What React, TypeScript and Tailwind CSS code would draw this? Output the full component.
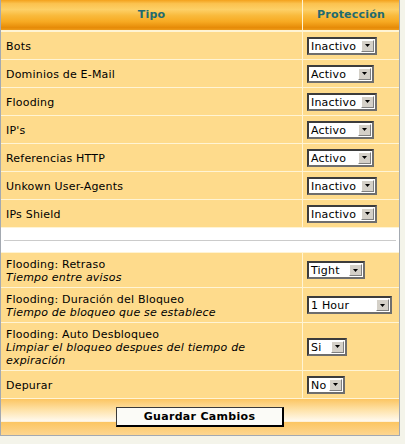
import React from "react";

type Row = {
  label: string;
  hint?: string;
  value: string;
  width: string;
  height: string;
};

const basicRows: Row[] = [
  { label: "Bots", value: "Inactivo", width: "w-[70px]", height: "h-[27px]" },
  { label: "Dominios de E-Mail", value: "Activo", width: "w-[67px]", height: "h-[27px]" },
  { label: "Flooding", value: "Inactivo", width: "w-[70px]", height: "h-[27px]" },
  { label: "IP's", value: "Activo", width: "w-[67px]", height: "h-[27px]" },
  { label: "Referencias HTTP", value: "Activo", width: "w-[67px]", height: "h-[27px]" },
  { label: "Unkown User-Agents", value: "Inactivo", width: "w-[70px]", height: "h-[27px]" },
  { label: "IPs Shield", value: "Inactivo", width: "w-[70px]", height: "h-[27px]" },
];

const floodRows: Row[] = [
  { label: "Flooding: Retraso", hint: "Tiempo entre avisos", value: "Tight", width: "w-[58px]", height: "h-[34px]" },
  {
    label: "Flooding: Duración del Bloqueo",
    hint: "Tiempo de bloqueo que se establece",
    value: "1 Hour",
    width: "w-[85px]",
    height: "h-[34px]",
  },
  {
    label: "Flooding: Auto Desbloqueo",
    hint: "Limpiar el bloqueo despues del tiempo de expiración",
    value: "Si",
    width: "w-[40px]",
    height: "h-[47px]",
  },
  { label: "Depurar", value: "No", width: "w-[38px]", height: "h-[27px]" },
];

function FakeSelect({ value, width }: { value: string; width: string }) {
  return (
    <div
      className={`flex h-[18px] ${width} border-2 border-t-[#3c3c3c] border-l-[#3c3c3c] border-r-[#6e6e6e] border-b-[#6e6e6e] bg-white`}
    >
      <span className="flex flex-1 items-center pt-px pl-[2px] text-[11px] leading-none text-black">{value}</span>
      <span className="my-px mr-px flex w-[13px] items-center justify-center border border-t-white border-l-white border-r-[#808080] border-b-[#808080] bg-[#d4d0c8]">
        <svg width="5" height="3" viewBox="0 0 5 3">
          <polygon points="0,0 5,0 2.5,3" fill="#000" />
        </svg>
      </span>
    </div>
  );
}

function OptionRow({ row }: { row: Row }) {
  return (
    <div className={`grid grid-cols-[301px_96px] gap-px ${row.height}`}>
      <div className="flex flex-col justify-center bg-[#fedb8c] px-[5px] pt-px text-[11px] leading-[13px] text-black">
        <span>{row.label}</span>
        {row.hint && <span className="italic">{row.hint}</span>}
      </div>
      <div className="flex items-center bg-[#fedb8c] pl-[4px]">
        <FakeSelect value={row.value} width={row.width} />
      </div>
    </div>
  );
}

export default function App() {
  return (
    <div className="min-h-screen bg-[#f4f4ea] font-['DejaVu_Sans',Verdana,sans-serif] tracking-[0.2px]">
      <div className="flex w-[400px] flex-col gap-px border-x border-b border-[#a3a9b1] bg-[#fff4d4]">
        <div className="grid h-[31px] grid-cols-[301px_96px] gap-px border-b border-[#fff4d4]">
          <div className="flex items-center justify-center bg-[linear-gradient(to_bottom,#f3a11d_0%,#fbc24f_12%,#fdd067_32%,#f9ba3c_52%,#f7aa22_72%,#e68b08_92%,#ee9a18_100%)] text-[11px] font-bold text-[#216a70]">
            Tipo
          </div>
          <div className="flex items-center justify-center bg-[linear-gradient(to_bottom,#f3a11d_0%,#fbc24f_12%,#fdd067_32%,#f9ba3c_52%,#f7aa22_72%,#e68b08_92%,#ee9a18_100%)] text-[11px] font-bold text-[#216a70]">
            Protección
          </div>
        </div>

        {basicRows.map((row) => (
          <OptionRow key={row.label} row={row} />
        ))}

        <div className="flex h-[24px] items-center bg-white px-[3px]">
          <div className="h-px w-full bg-[#cbcbcb]" />
        </div>

        {floodRows.map((row) => (
          <OptionRow key={row.label} row={row} />
        ))}

        <div className="flex h-[36px] items-center justify-center bg-[linear-gradient(to_bottom,#fcc562_0%,#fee2a8_30%,#fffaf0_62%,#fcc663_65%,#fdd690_100%)]">
          <button className="h-[20px] w-[168px] border border-[#3a3a3a] border-r-2 border-b-2 border-r-black border-b-black bg-[#fbfbf7] text-[11px] font-bold leading-none tracking-[0.3px] text-black">
            Guardar Cambios
          </button>
        </div>
      </div>
    </div>
  );
}
